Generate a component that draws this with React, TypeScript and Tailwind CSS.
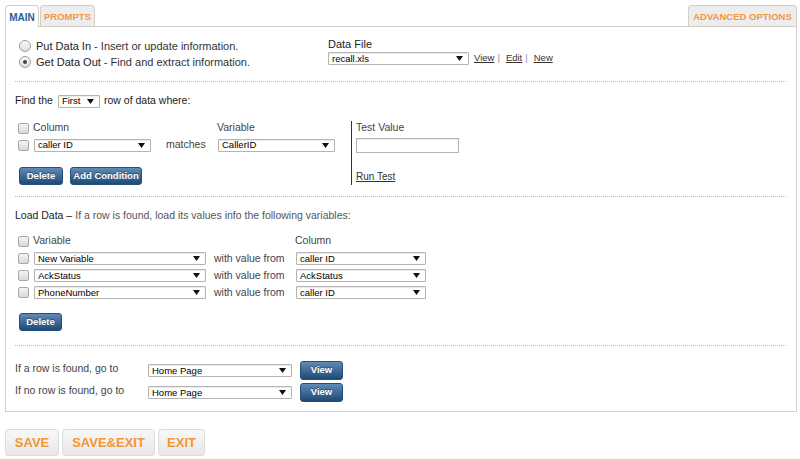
import React from "react";

function Arrow() {
  return (
    <svg width="7" height="5" viewBox="0 0 7 5" className="shrink-0">
      <path d="M0 0h7L3.5 5z" fill="#111" />
    </svg>
  );
}

function Select({ className, text }: { className: string; text: string }) {
  return (
    <div
      className={`flex h-[13px] items-center justify-between rounded-[1px] border border-[#b3b3b3] bg-white pl-[3px] pr-[5px] text-[9.5px] leading-none text-black shadow-[inset_0_1px_1px_rgba(0,0,0,0.08)] ${className}`}
    >
      <span>{text}</span>
      <Arrow />
    </div>
  );
}

function Check() {
  return (
    <div className="h-[11px] w-[11px] shrink-0 rounded-[2px] border border-[#a8a8a8] bg-gradient-to-b from-[#f4f4f4] to-[#d9d9d9]" />
  );
}

function Radio({ on }: { on?: boolean }) {
  return (
    <div className="flex h-3 w-3 shrink-0 items-center justify-center rounded-full border border-[#9a9a9a] bg-gradient-to-b from-[#fafafa] to-[#dedede]">
      {on && <div className="h-[4px] w-[4px] rounded-full bg-[#444]" />}
    </div>
  );
}

function BlueButton({ className, label }: { className: string; label: string }) {
  return (
    <div
      className={`flex items-center justify-center rounded-[3px] border border-[#244f7b] bg-gradient-to-b from-[#5f8bb6] to-[#1f4a75] text-[9.5px] font-bold text-white [text-shadow:0_-1px_0_rgba(0,0,0,0.35)] ${className}`}
    >
      {label}
    </div>
  );
}

function SaveButton({ className, label }: { className: string; label: string }) {
  return (
    <div
      className={`flex h-[27px] items-center justify-center rounded-[3px] border border-[#dcdcdc] bg-gradient-to-b from-[#f8f8f8] to-[#e7e7e7] text-[13px] font-bold text-[#f39534] ${className}`}
    >
      {label}
    </div>
  );
}

const loadRows = [
  { variable: "New Variable", column: "caller ID" },
  { variable: "AckStatus", column: "AckStatus" },
  { variable: "PhoneNumber", column: "caller ID" },
];

export default function App() {
  return (
    <div className="min-h-screen bg-white pl-[5px] pt-[5px] font-['Liberation_Sans',Arial,sans-serif] text-[10.5px] text-[#444]">
      <div className="w-[792px]">
        {/* Tabs */}
        <div className="relative z-10 -mb-[22px] flex h-[22px] items-start">
          <div className="flex h-[22px] w-[34px] items-center justify-center rounded-t-[4px] border-x border-t border-[#d3cfc3] bg-white pt-[2px] text-[10px] font-bold text-[#2a5d91]">
            MAIN
          </div>
          <div className="ml-[1px] flex h-[21px] w-[55px] items-center justify-center rounded-t-[4px] border-x border-t border-[#d3cfc3] bg-[#ededed] pt-[2px] text-[9.5px] font-bold text-[#f5963a]">
            PROMPTS
          </div>
          <div className="ml-auto flex h-[21px] w-[109px] items-center justify-center rounded-t-[4px] border-x border-t border-[#d3cfc3] bg-[#ededed] pt-[2px] text-[9.5px] font-bold text-[#f5963a]">
            ADVANCED OPTIONS
          </div>
        </div>

        {/* Panel */}
        <div className="mt-[21px] border border-[#d3cfc3] bg-white pb-[9px] pl-[9px] pr-[10px]">
          {/* Put / Get */}
          <div className="flex h-[54px]">
            <div className="w-[313px] pt-[11px]">
              <div className="flex h-4 items-center pl-[4px]">
                <Radio />
                <span className="ml-[5px] text-[11px] text-[#333]">
                  <span className="text-[#222]">Put Data In</span> - Insert or update information.
                </span>
              </div>
              <div className="flex h-4 items-center pl-[4px]">
                <Radio on />
                <span className="ml-[5px] text-[11px] text-[#333]">
                  <span className="text-[#222]">Get Data Out</span> - Find and extract information.
                </span>
              </div>
            </div>
            <div className="pt-[10px]">
              <div className="flex h-[14px] items-center text-[11px] text-[#222]">Data File</div>
              <div className="mt-px flex h-[13px] items-center">
                <Select className="w-[141px]" text="recall.xls" />
                <div className="ml-[5px] flex items-center text-[9.5px] text-[#333]">
                  <span className="underline">View</span>
                  <span className="mx-[3px] text-[#8c8cb0]">|</span>
                  <span className="ml-[3px] underline">Edit</span>
                  <span className="mx-[3px] text-[#8c8cb0]">|</span>
                  <span className="ml-[3px] underline">New</span>
                </div>
              </div>
            </div>
          </div>

          <div className="border-t border-dotted border-[#b8b8b8]" />

          {/* Find */}
          <div className="mt-[12px] flex h-[14px] items-center text-[#222]">
            <span>Find the</span>
            <Select className="ml-[5px] w-[42px]" text="First" />
            <span className="ml-[4px]">row of data where:</span>
          </div>

          <div className="mt-[13px] flex">
            <div className="w-[336px]">
              <div className="flex h-[14px] items-center">
                <div className="flex w-[202px] items-center pl-[3px]">
                  <Check />
                  <span className="ml-[4px]">Column</span>
                </div>
                <span>Variable</span>
              </div>
              <div className="mt-[3px] flex h-[14px] items-center pl-[3px]">
                <Check />
                <Select className="ml-[5px] w-[117px]" text="caller ID" />
                <span className="w-[67px] pl-[15px]">matches</span>
                <Select className="w-[117px]" text="CallerID" />
              </div>
              <div className="mt-[15px] flex pl-[4px]">
                <BlueButton className="h-[18px] w-[44px]" label="Delete" />
                <BlueButton className="ml-[7px] h-[18px] w-[72px]" label="Add Condition" />
              </div>
            </div>
            <div className="h-[64px] border-l border-[#333] pl-[4px]">
              <div className="flex h-[14px] items-center">Test Value</div>
              <div className="mt-[3px] h-[15px] w-[103px] border border-[#b3b3b3] bg-white shadow-[inset_0_1px_1px_rgba(0,0,0,0.08)]" />
              <div className="mt-[16px] flex h-[14px] items-center text-[10px] text-[#333] underline">Run Test</div>
            </div>
          </div>

          <div className="mt-[11px] border-t border-dotted border-[#b8b8b8]" />

          {/* Load data */}
          <div className="mt-[12px] flex h-[14px] items-center">
            <span className="text-[#222]">Load Data –</span>
            <span className="ml-[3px] text-[#555]">If a row is found, load its values info the following variables:</span>
          </div>

          <div className="mt-[11px] flex h-[14px] items-center">
            <div className="flex w-[280px] items-center pl-[3px]">
              <Check />
              <span className="ml-[4px]">Variable</span>
            </div>
            <span>Column</span>
          </div>

          <div className="mt-[2px]">
            {loadRows.map((r) => (
              <div key={r.variable} className="flex h-[17px] items-center pl-[3px]">
                <Check />
                <Select className="ml-[5px] w-[172px]" text={r.variable} />
                <span className="w-[90px] pl-[8px]">with value from</span>
                <Select className="w-[130px]" text={r.column} />
              </div>
            ))}
          </div>

          <div className="mt-[12px] flex pl-[4px]">
            <BlueButton className="h-[18px] w-[43px]" label="Delete" />
          </div>

          <div className="mt-[14px] border-t border-dotted border-[#b8b8b8]" />

          {/* Go to */}
          <div className="mt-[15px] flex h-[19px] items-center">
            <span className="-mt-[4px] w-[133px] text-[#444]">If a row is found, go to</span>
            <Select className="w-[144px]" text="Home Page" />
            <BlueButton className="ml-[8px] h-[19px] w-[43px]" label="View" />
          </div>
          <div className="mt-[3px] flex h-[19px] items-center">
            <span className="-mt-[3px] w-[133px] text-[#444]">If no row is found, go to</span>
            <Select className="w-[144px]" text="Home Page" />
            <BlueButton className="ml-[8px] h-[19px] w-[43px]" label="View" />
          </div>
        </div>

        {/* Bottom buttons */}
        <div className="mt-[17px] flex gap-[3px]">
          <SaveButton className="w-[54px]" label="SAVE" />
          <SaveButton className="w-[93px]" label="SAVE&EXIT" />
          <SaveButton className="w-[47px]" label="EXIT" />
        </div>
      </div>
    </div>
  );
}
